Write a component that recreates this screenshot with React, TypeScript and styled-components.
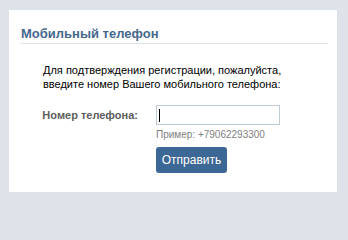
import React from 'react';
import styled, { createGlobalStyle } from 'styled-components';

const GlobalStyle = createGlobalStyle`
  html, body {
    margin: 0;
    padding: 0;
    background: #dde3e9;
  }
  body {
    font-family: "Liberation Sans", Arial, sans-serif;
  }
`;

const Page = styled.div`
  padding: 10px 11px 11px 9px;
`;

const Panel = styled.div`
  background: #ffffff;
  height: 182px;
  box-sizing: border-box;
  padding: 16px 9px 0 11px;
`;

const Title = styled.h2`
  margin: 0;
  padding: 0 0 2px 1px;
  font-size: 13px;
  line-height: 15px;
  font-weight: bold;
  color: #45688e;
  border-bottom: 1px solid #dfe4ea;
`;

const Intro = styled.p`
  margin: 19px 0 0 23px;
  font-size: 11px;
  line-height: 14px;
  color: #000;
`;

const Form = styled.div`
  display: grid;
  grid-template-columns: 110px 124px;
  column-gap: 18px;
  margin: 14px 0 0 8px;
`;

const Label = styled.label`
  grid-column: 1;
  align-self: center;
  text-align: right;
  font-size: 11px;
  font-weight: bold;
  color: #5d5d5d;
`;

const Field = styled.div`
  grid-column: 2;
  position: relative;
  height: 20px;
  box-sizing: border-box;
  border: 1px solid #c0cad5;
  background: #fff;
`;

const Caret = styled.span`
  position: absolute;
  left: 2px;
  top: 3px;
  width: 1px;
  height: 13px;
  background: #000;
`;

const Hint = styled.div`
  grid-column: 2;
  margin-top: 3px;
  font-size: 10px;
  line-height: 13px;
  color: #7f7f7f;
`;

const Submit = styled.button<{ $width?: number }>`
  grid-column: 2;
  justify-self: start;
  margin-top: 6px;
  width: ${(p) => p.$width ?? 71}px;
  height: 26px;
  padding: 0;
  border: none;
  border-radius: 3px;
  background: #3d6794;
  color: #fff;
  font-family: "Liberation Sans", Arial, sans-serif;
  font-size: 12px;
`;

const App: React.FC = () => {
  return (
    <Page>
      <GlobalStyle />
      <Panel>
        <Title>Мобильный телефон</Title>
        <Intro>
          Для подтверждения регистрации, пожалуйста,
          <br />
          введите номер Вашего мобильного телефона:
        </Intro>
        <Form>
          <Label>Номер телефона:</Label>
          <Field>
            <Caret />
          </Field>
          <Hint>Пример: +79062293300</Hint>
          <Submit>Отправить</Submit>
        </Form>
      </Panel>
    </Page>
  );
};

export default App;
